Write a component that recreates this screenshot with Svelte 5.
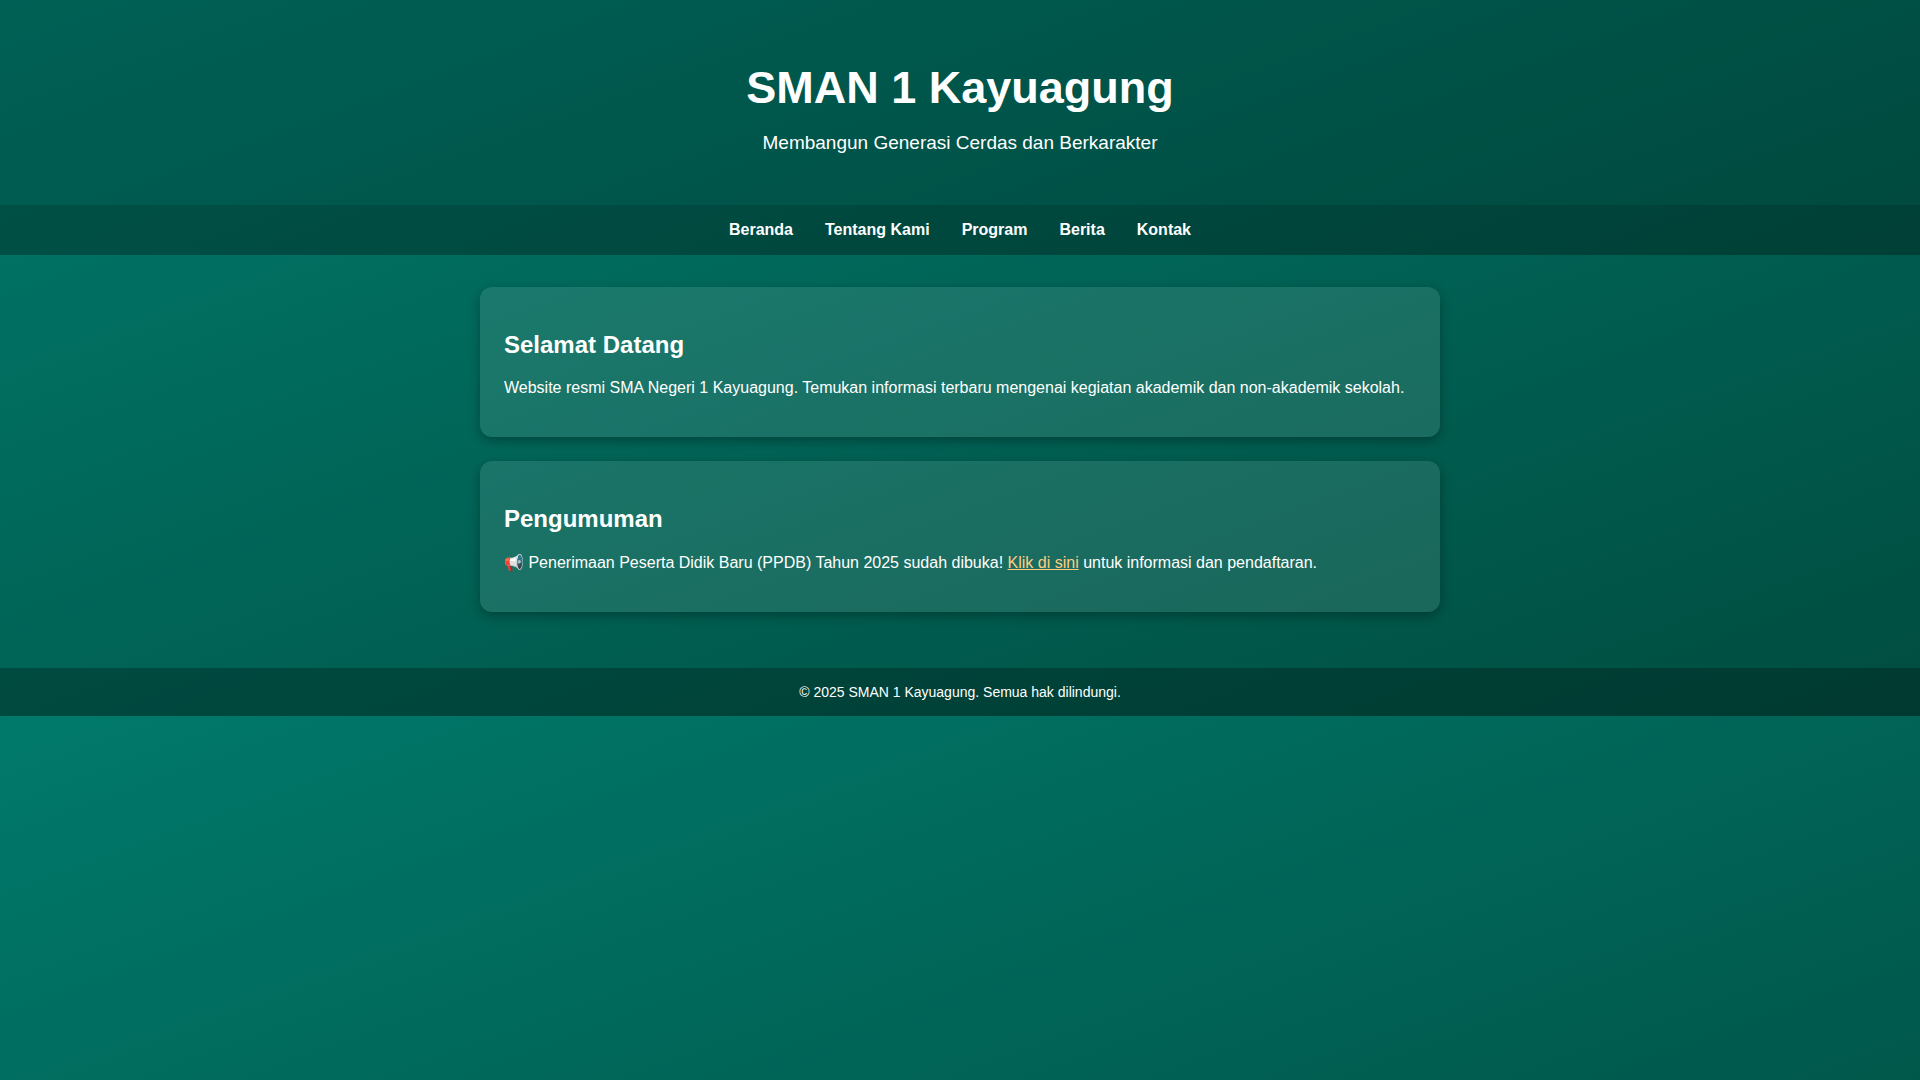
<script>
  const links = [
    { label: 'Beranda', href: '#beranda' },
    { label: 'Tentang Kami', href: '#tentang' },
    { label: 'Program', href: '#program' },
    { label: 'Berita', href: '#berita' },
    { label: 'Kontak', href: '#kontak' }
  ];
</script>

<header>
  <h1>SMAN 1 Kayuagung</h1>
  <p>Membangun Generasi Cerdas dan Berkarakter</p>
</header>

<nav>
  {#each links as link}
    <a href={link.href}>{link.label}</a>
  {/each}
</nav>

<main>
  <section class="card" id="beranda">
    <h2>Selamat Datang</h2>
    <p>
      Website resmi SMA Negeri 1 Kayuagung. Temukan informasi terbaru mengenai kegiatan akademik dan
      non-akademik sekolah.
    </p>
  </section>

  <section class="card" id="berita">
    <h2>Pengumuman</h2>
    <p>
      📢 Penerimaan Peserta Didik Baru (PPDB) Tahun 2025 sudah dibuka!
      <a href="#ppdb">Klik di sini</a> untuk informasi dan pendaftaran.
    </p>
  </section>
</main>

<footer>
  <p>&copy; 2025 SMAN 1 Kayuagung. Semua hak dilindungi.</p>
</footer>

<style>
  /* The gradient repeats below the footer, one tile per body height */
  :global(body) {
    margin: 0;
    background: linear-gradient(160deg, #00796b, #004d40);
    color: #fff;
    font-family: 'Liberation Sans', Arial, sans-serif;
  }

  header {
    padding: 62px 16px 51px;
    text-align: center;
    background: rgba(0, 0, 0, 0.2);
  }

  h1 {
    margin: 0 0 18px;
    font-size: 45px;
    line-height: 52px;
  }

  header p {
    margin: 0;
    font-size: 19px;
    line-height: 22px;
  }

  nav {
    display: flex;
    flex-wrap: wrap;
    justify-content: center;
    gap: 32px;
    padding: 16px;
    background: rgba(0, 0, 0, 0.3);
  }

  nav a {
    color: #fff;
    font-weight: bold;
    line-height: 18px;
    text-decoration: none;
  }

  main {
    max-width: 960px;
    margin: 0 auto;
    padding: 32px 16px;
  }

  .card {
    margin-bottom: 24px;
    padding: 24px;
    border-radius: 12px;
    background: rgba(255, 255, 255, 0.1);
    box-shadow: 0 4px 12px rgba(0, 0, 0, 0.3);
  }

  h2 {
    margin: 20px 0;
    font-size: 24px;
    line-height: 28px;
  }

  .card p {
    margin: 16px 0;
  }

  .card a {
    color: #ffcc80;
  }

  footer {
    padding: 16px;
    text-align: center;
    background: rgba(0, 0, 0, 0.25);
  }

  footer p {
    margin: 0;
    font-size: 14px;
    line-height: 16px;
  }
</style>
